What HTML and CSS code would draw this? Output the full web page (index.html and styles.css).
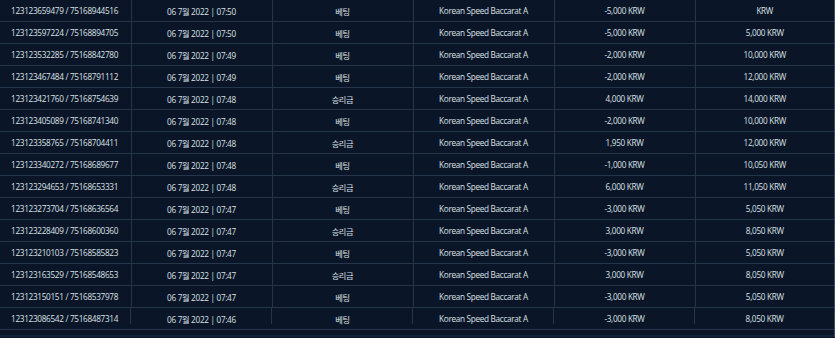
FILE: index.html
```html
<!DOCTYPE html>
<html lang="ko">
<head>
<meta charset="utf-8">
<link rel="stylesheet" href="styles.css">
</head>
<body>
<div class="wrap">
<table class="hist">
<colgroup>
<col class="c1"><col class="c2"><col class="c3"><col class="c4"><col class="c5"><col class="c6">
</colgroup>
<tbody>
<tr><td class="id">123123659479 / 75168944516</td><td>06 7월 2022 | 07:50</td><td>베팅</td><td>Korean Speed Baccarat A</td><td>-5,000 KRW</td><td>KRW</td></tr>
<tr><td class="id">123123597224 / 75168894705</td><td>06 7월 2022 | 07:50</td><td>베팅</td><td>Korean Speed Baccarat A</td><td>-5,000 KRW</td><td>5,000 KRW</td></tr>
<tr><td class="id">123123532285 / 75168842780</td><td>06 7월 2022 | 07:49</td><td>베팅</td><td>Korean Speed Baccarat A</td><td>-2,000 KRW</td><td>10,000 KRW</td></tr>
<tr><td class="id">123123467484 / 75168791112</td><td>06 7월 2022 | 07:49</td><td>베팅</td><td>Korean Speed Baccarat A</td><td>-2,000 KRW</td><td>12,000 KRW</td></tr>
<tr><td class="id">123123421760 / 75168754639</td><td>06 7월 2022 | 07:48</td><td>승리금</td><td>Korean Speed Baccarat A</td><td>4,000 KRW</td><td>14,000 KRW</td></tr>
<tr><td class="id">123123405089 / 75168741340</td><td>06 7월 2022 | 07:48</td><td>베팅</td><td>Korean Speed Baccarat A</td><td>-2,000 KRW</td><td>10,000 KRW</td></tr>
<tr><td class="id">123123358765 / 75168704411</td><td>06 7월 2022 | 07:48</td><td>승리금</td><td>Korean Speed Baccarat A</td><td>1,950 KRW</td><td>12,000 KRW</td></tr>
<tr><td class="id">123123340272 / 75168689677</td><td>06 7월 2022 | 07:48</td><td>베팅</td><td>Korean Speed Baccarat A</td><td>-1,000 KRW</td><td>10,050 KRW</td></tr>
<tr><td class="id">123123294653 / 75168653331</td><td>06 7월 2022 | 07:48</td><td>승리금</td><td>Korean Speed Baccarat A</td><td>6,000 KRW</td><td>11,050 KRW</td></tr>
<tr><td class="id">123123273704 / 75168636564</td><td>06 7월 2022 | 07:47</td><td>베팅</td><td>Korean Speed Baccarat A</td><td>-3,000 KRW</td><td>5,050 KRW</td></tr>
<tr><td class="id">123123228409 / 75168600360</td><td>06 7월 2022 | 07:47</td><td>승리금</td><td>Korean Speed Baccarat A</td><td>3,000 KRW</td><td>8,050 KRW</td></tr>
<tr><td class="id">123123210103 / 75168585823</td><td>06 7월 2022 | 07:47</td><td>베팅</td><td>Korean Speed Baccarat A</td><td>-3,000 KRW</td><td>5,050 KRW</td></tr>
<tr><td class="id">123123163529 / 75168548653</td><td>06 7월 2022 | 07:47</td><td>승리금</td><td>Korean Speed Baccarat A</td><td>3,000 KRW</td><td>8,050 KRW</td></tr>
<tr><td class="id">123123150151 / 75168537978</td><td>06 7월 2022 | 07:47</td><td>베팅</td><td>Korean Speed Baccarat A</td><td>-3,000 KRW</td><td>5,050 KRW</td></tr>
<tr class="last"><td class="id">123123086542 / 75168487314</td><td>06 7월 2022 | 07:46</td><td>베팅</td><td>Korean Speed Baccarat A</td><td>-3,000 KRW</td><td>8,050 KRW</td></tr>
</tbody>
</table>
<div class="foot"></div>
</div>
</body>
</html>
```
FILE: styles.css
```css
html, body {
  margin: 0;
  padding: 0;
  background: #0a1628;
  overflow: hidden;
}
.wrap {
  width: 835px;
  height: 338px;
  margin-top: -1px;
  box-sizing: border-box;
  border-right: 1px solid #3c4b5e;
  display: flex;
  flex-direction: column;
}
.hist {
  width: 834px;
  border-collapse: collapse;
  table-layout: fixed;
  font-family: "Open Sans", "Noto Sans CJK KR", sans-serif;
  font-size: 8.2px;
  letter-spacing: -0.3px;
  color: #dde1e6;
}
.c1 { width: 131px; }
.c2, .c3, .c4, .c5 { width: 141px; }
.c6 { width: 139px; }
.hist td {
  height: 21px;
  padding: 0;
  text-align: center;
  vertical-align: middle;
  border-top: 1px solid #26364a;
  border-right: 1px solid #26364a;
  white-space: nowrap;
}
.hist td:last-child { border-right: none; }
.hist td.id {
  text-align: left;
  padding-left: 11px;
}
.hist tr.last td {
  border-right: none;
  border-bottom: 1px solid #26364a;
  background: linear-gradient(#26364a, #26364a) right top / 1px 16px no-repeat;
}
.hist tr.last td:last-child { background: none; }
.foot {
  margin-top: 5px;
  flex: 1;
  background: #0f2339;
}
```
